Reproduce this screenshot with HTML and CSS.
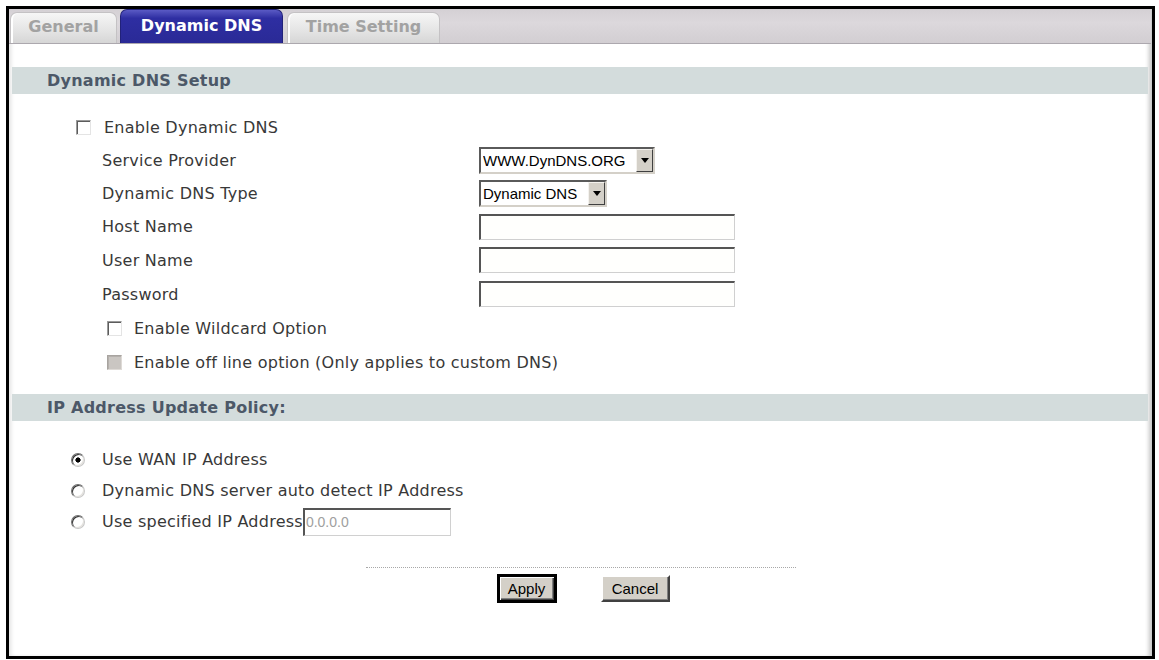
FILE: index.html
```html
<!DOCTYPE html>
<html lang="en">
<head>
    <meta charset="UTF-8">
    <title>Dynamic DNS</title>
    <link rel="stylesheet" href="styles.css">
</head>
<body>
    <div class="frame">
        <nav class="tab-bar">
            <a href="#" class="tab">General</a>
            <a href="#" class="tab active">Dynamic DNS</a>
            <a href="#" class="tab">Time Setting</a>
        </nav>

        <div class="section-title">Dynamic DNS Setup</div>

        <div class="setup">
            <label class="row check-row">
                <input type="checkbox" class="cb">
                <span>Enable Dynamic DNS</span>
            </label>
            <div class="row">
                <span class="label">Service Provider</span>
                <div class="combo">
                    <select class="provider"><option>WWW.DynDNS.ORG</option></select>
                    <span class="arrow"></span>
                </div>
            </div>
            <div class="row">
                <span class="label">Dynamic DNS Type</span>
                <div class="combo">
                    <select class="dns-type"><option>Dynamic DNS</option></select>
                    <span class="arrow"></span>
                </div>
            </div>
            <div class="row">
                <span class="label">Host Name</span>
                <input type="text" class="txt">
            </div>
            <div class="row wide">
                <span class="label">User Name</span>
                <input type="text" class="txt">
            </div>
            <div class="row wide">
                <span class="label">Password</span>
                <input type="password" class="txt">
            </div>
            <label class="row wide sub-check">
                <input type="checkbox" class="cb">
                <span>Enable Wildcard Option</span>
            </label>
            <label class="row wide sub-check">
                <input type="checkbox" class="cb" disabled>
                <span>Enable off line option (Only applies to custom DNS)</span>
            </label>
        </div>

        <div class="section-title second">IP Address Update Policy:</div>

        <div class="policy">
            <label class="radio-row">
                <input type="radio" name="ip" class="rb" checked>
                <span>Use WAN IP Address</span>
            </label>
            <label class="radio-row">
                <input type="radio" name="ip" class="rb">
                <span>Dynamic DNS server auto detect IP Address</span>
            </label>
            <label class="radio-row">
                <input type="radio" name="ip" class="rb">
                <span>Use specified IP Address</span><input type="text" class="ip-input" value="0.0.0.0">
            </label>
        </div>

        <div class="actions">
            <div class="dots"></div>
            <div class="buttons">
                <button class="btn default">Apply</button>
                <button class="btn">Cancel</button>
            </div>
        </div>
    </div>
</body>
</html>
```

FILE: styles.css
```css
* {
    box-sizing: border-box;
}

body {
    margin: 0;
    background: #fff;
    font-family: 'DejaVu Sans', Verdana, sans-serif;
    font-size: 16px;
    letter-spacing: 0.25px;
    color: #383838;
}

.frame {
    margin: 6px 0 0 6px;
    width: 1149px;
    height: 653px;
    border: 3px solid #000;
    background: #fff;
    box-shadow: inset 4px 0 4px -2px #e2e2e2, inset -5px 0 4px -2px #c4c4c4;
}

/* Tabs */
.tab-bar {
    height: 35px;
    display: flex;
    align-items: flex-end;
    gap: 3px;
    padding-left: 1px;
    background: linear-gradient(#d4d0d4, #dcd8dc 40%, #d2ced2);
    border-bottom: 1px solid #aca8ae;
    margin-right: 1px;
    letter-spacing: 0;
}

.tab {
    display: flex;
    align-items: center;
    justify-content: center;
    height: 31px;
    padding-bottom: 3px;
    border: 1px solid #c4c2c4;
    border-bottom: none;
    border-radius: 7px 7px 0 0;
    background: linear-gradient(#f6f6f6, #e4e4e4 60%, #d6d6d6);
    color: #a2a2a2;
    font-weight: bold;
    text-decoration: none;
    box-shadow: inset 2px 0 0 #fff;
}

.tab:nth-child(1) {
    width: 107px;
}

.tab.active {
    width: 163px;
    height: 34px;
    padding-bottom: 2px;
    border-color: #22227a;
    background: linear-gradient(#5a5ac4, #2e2ea2 25%, #2a2a96);
    color: #fff;
    box-shadow: none;
}

.tab:nth-child(3) {
    width: 153px;
    margin-left: 1px;
}

/* Section headers */
.section-title {
    margin: 23px 4px 0 3px;
    height: 27px;
    line-height: 27px;
    padding-left: 35px;
    background: #d3dcdc;
    color: #4c5868;
    font-weight: bold;
}

.section-title.second {
    margin-top: 15px;
}

.setup {
    padding-top: 17px;
    padding-left: 93px;
}

.row {
    display: flex;
    align-items: center;
    height: 33px;
}

.row.wide {
    height: 34px;
}

.label {
    width: 377px;
}

.check-row {
    margin-left: -26px;
}

.check-row .cb {
    margin-right: 13px;
}

.sub-check {
    margin-left: 5px;
}

.sub-check .cb {
    margin-right: 12px;
}

/* Classic form controls */
.cb {
    appearance: none;
    flex: none;
    margin: 0;
    width: 15px;
    height: 15px;
    background: #fff;
    border: 1px solid;
    border-color: #9a9a9a #e4e4e4 #e4e4e4 #9a9a9a;
    box-shadow: inset 1px 1px 0 #5c5c5c;
}

.cb:disabled {
    background: #cac6c2;
    border-color: #a8a4a0 #dedad6 #dedad6 #a8a4a0;
    box-shadow: inset 1px 1px 0 #b4b0ac;
}

.combo {
    display: flex;
    height: 27px;
    border: 2px solid;
    border-color: #5a5a5a #d4d0c8 #d4d0c8 #5a5a5a;
    background: #fff;
    letter-spacing: 0;
}

.combo select {
    appearance: none;
    border: none;
    background: transparent;
    font-family: 'Liberation Sans', Arial, sans-serif;
    font-size: 15px;
    color: #000;
    padding: 0 2px;
    outline: none;
}

.provider {
    width: 155px;
}

.dns-type {
    width: 107px;
}

.arrow {
    width: 17px;
    display: flex;
    align-items: center;
    justify-content: center;
    background: #d4d0c8;
    border: 1px solid;
    border-color: #f4f2ee #404040 #404040 #f4f2ee;
}

.arrow::after {
    content: '';
    border-top: 5px solid #000;
    border-left: 4px solid transparent;
    border-right: 4px solid transparent;
}

.txt {
    width: 256px;
    height: 26px;
    margin: 0;
    border-style: solid;
    border-width: 2px 1px 1px 2px;
    border-color: #555 #d0d0d0 #d0d0d0 #555;
    background: #fffffd;
    outline: none;
}

/* IP policy */
.policy {
    padding-top: 23px;
    padding-left: 62px;
}

.radio-row {
    display: flex;
    align-items: center;
    height: 31px;
}

.rb {
    appearance: none;
    flex: none;
    margin: 0 17px 0 0;
    width: 14px;
    height: 14px;
    border-radius: 50%;
    border: 1px solid;
    border-color: #707070 #c8c8c8 #c8c8c8 #707070;
    box-shadow: inset 1px 1px 0 #303030, inset -1px -1px 0 #e4e2de;
    background: #fff;
}

.rb:checked {
    background: radial-gradient(circle, #000 0 2.3px, #fff 2.9px);
}

.ip-input {
    width: 148px;
    height: 28px;
    margin: 0;
    padding: 0 1px;
    border-style: solid;
    border-width: 2px 1px 1px 2px;
    border-color: #555 #d0d0d0 #d0d0d0 #555;
    font-family: 'Liberation Sans', Arial, sans-serif;
    font-size: 14px;
    letter-spacing: 0;
    color: #a0a0a0;
    background: #fff;
    outline: none;
}

/* Buttons */
.actions {
    padding-top: 30px;
}

.dots {
    width: 430px;
    margin: 0 auto;
    border-top: 1px dotted #a8a8a8;
}

.buttons {
    display: flex;
    justify-content: center;
    align-items: flex-start;
    gap: 44px;
    padding-top: 6px;
    padding-left: 5px;
}

.btn {
    height: 27px;
    padding: 0;
    font-family: 'Liberation Sans', Arial, sans-serif;
    font-size: 15px;
    letter-spacing: 0;
    color: #000;
    background: #d4d0c8;
    border: 2px solid;
    border-color: #fff #404040 #404040 #fff;
    box-shadow: inset -1px -1px 0 #808080;
    margin-top: 1px;
    width: 69px;
}

.btn.default {
    width: 60px;
    height: 29px;
    margin-top: 0;
    border-width: 3px;
    border-color: #000;
    box-shadow: inset 1px 1px 0 #fff, inset -1px -1px 0 #404040, inset -2px -2px 0 #808080;
}
```
